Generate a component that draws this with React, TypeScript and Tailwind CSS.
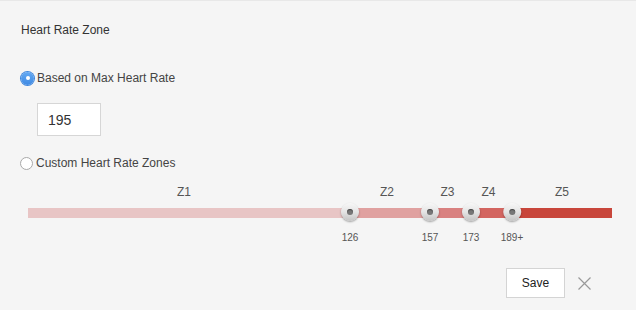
import { useState } from "react";

const zones = [
  { name: "Z1", width: 322, color: "bg-[#e8c5c5]", end: "126", shift: "pr-[10px]" },
  { name: "Z2", width: 80, color: "bg-[#e0a1a0]", end: "157", shift: "pr-[6px]" },
  { name: "Z3", width: 41, color: "bg-[#d98180]", end: "173", shift: "pr-[6px]" },
  { name: "Z4", width: 41, color: "bg-[#d36560]", end: "189+", shift: "pr-[6px]" },
  { name: "Z5", width: 100, color: "bg-[#c8463b]", end: "", shift: "" },
];

const Radio = ({ checked }: { checked: boolean }) =>
  checked ? (
    <span className="flex justify-center items-center w-[13px] h-[13px] rounded-full bg-gradient-to-b from-[#63a9f3] to-[#3f8ae3] shadow-[0_0_0_1px_#3d86de]">
      <span className="w-[4px] h-[4px] rounded-full bg-white" />
    </span>
  ) : (
    <span className="w-[13px] h-[13px] rounded-full bg-white border border-[#a9a9a9]" />
  );

const Handle = () => (
  <span className="flex justify-center items-center w-[18px] h-[18px] rounded-full bg-gradient-to-b from-[#f7f7f7] via-[#e4e4e4] to-[#c4c4c4] shadow-[0_1px_2px_rgba(0,0,0,0.35)]">
    <span className="w-[6px] h-[6px] rounded-full bg-[#777] shadow-[inset_0_1px_1px_rgba(0,0,0,0.45)]" />
  </span>
);

const App = () => {
  const [mode, setMode] = useState("max");

  return (
    <div
      className="w-[636px] h-[310px] bg-[#f5f5f5] border-t border-[#e8e8e8] pl-[21px] pt-[21px] text-[#333]"
      style={{ fontFamily: '"Liberation Sans", Arial, sans-serif' }}
    >
      <h3 className="text-[12px] leading-4">Heart Rate Zone</h3>

      <label className="flex items-center gap-[3px] mt-[32px] text-[12px] leading-4 text-[#444] cursor-pointer" onClick={() => setMode("max")}>
        <Radio checked={mode === "max"} />
        <span>Based on Max Heart Rate</span>
      </label>

      <input
        className="block mt-[17px] ml-[16px] w-[64px] h-[33px] bg-white border border-[#d6d6d6] pl-[10px] text-[14px] text-[#333] outline-none"
        type="text"
        defaultValue="195"
      />

      <label className="flex items-center gap-[3px] mt-[19px] -ml-[1px] text-[12px] leading-4 text-[#444] cursor-pointer" onClick={() => setMode("custom")}>
        <Radio checked={mode === "custom"} />
        <span>Custom Heart Rate Zones</span>
      </label>

      <div className="flex mt-[13px] ml-[7px]">
        {zones.map((z) => (
          <div key={z.name} className="relative flex flex-col" style={{ width: z.width }}>
            <span className={`text-center text-[12px] leading-4 text-[#555] ${z.shift}`}>{z.name}</span>
            <div className={`mt-[8px] h-[10px] ${z.color}`} />
            {z.end && (
              <div className="absolute right-0 top-[19px] translate-x-1/2 z-10 flex flex-col items-center">
                <Handle />
                <span className="mt-[10px] text-[10px] leading-[14px] text-[#555]">{z.end}</span>
              </div>
            )}
          </div>
        ))}
      </div>

      <div className="flex justify-end items-center gap-[13px] mt-[50px] pr-[45px]">
        <button className="w-[59px] h-[30px] bg-white border border-[#d4d4d4] text-[12px] text-[#222]">Save</button>
        <svg width="13" height="13" viewBox="0 0 13 13" className="text-[#999]">
          <path d="M0.5 0.5L12.5 12.5M12.5 0.5L0.5 12.5" stroke="currentColor" strokeWidth="1.2" />
        </svg>
      </div>
    </div>
  );
};

export default App;
